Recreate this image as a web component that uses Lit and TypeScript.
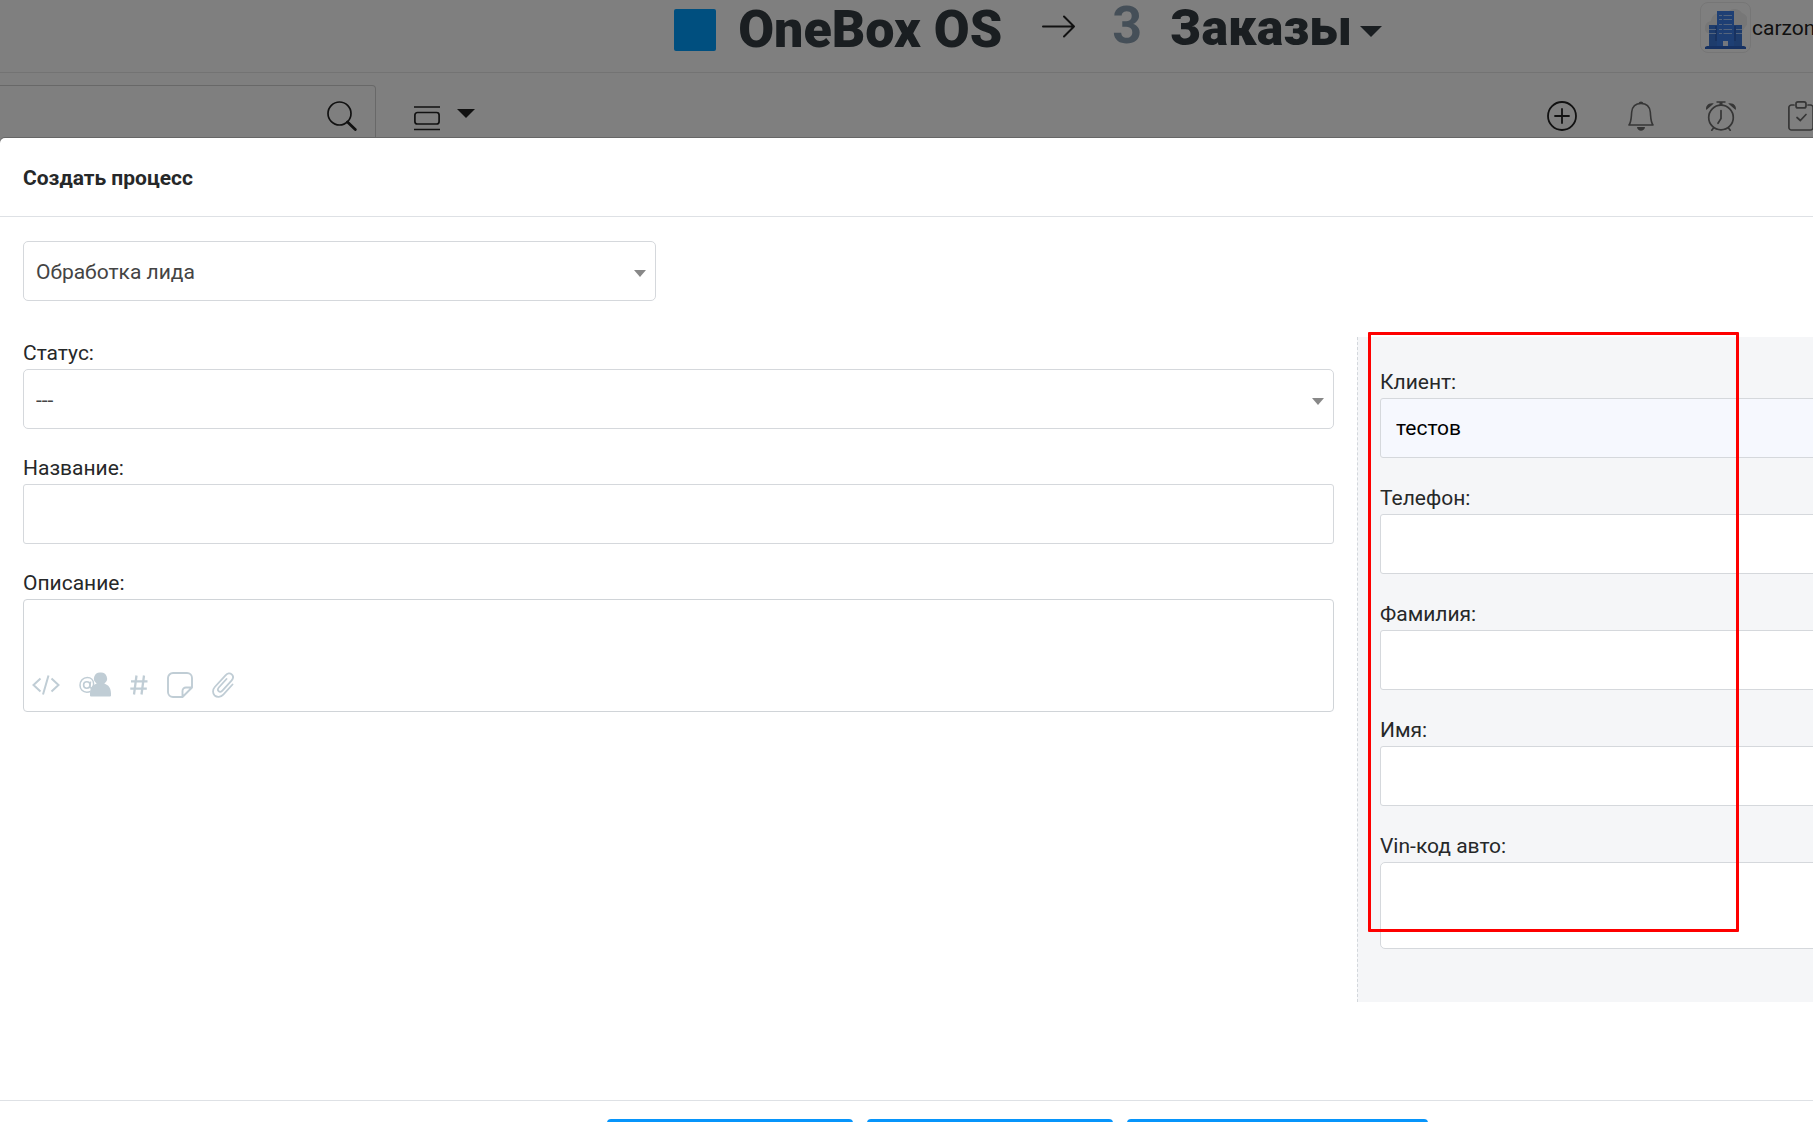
import { LitElement, html, css, svg } from "lit";
import { customElement, property } from "lit/decorators.js";

const glyphs = {
  search: {
    w: 30, h: 30,
    body: svg`<circle cx="12.5" cy="12.5" r="11.5" fill="none" stroke="currentColor" stroke-width="1.7"/>
      <path d="M20.5 21L28.3 28.5" stroke="currentColor" stroke-width="2.8" stroke-linecap="round"/>`,
  },
  view: {
    w: 26, h: 26,
    body: svg`<path d="M0.5 2H25.500M0.500 24.500H25.500" stroke="currentColor" stroke-width="1.7" stroke-linecap="round"/>
      <rect x="0.900" y="7.500" width="24.200" height="11.500" rx="2.500" fill="none" stroke="currentColor" stroke-width="1.7"/>`,
  },
  caretSmall: { w: 18, h: 9, body: svg`<path d="M0 0H18L9 9Z" fill="currentColor"/>` },
  caretLarge: { w: 22, h: 11, body: svg`<path d="M0 0H22L11 11Z" fill="currentColor"/>` },
  arrow: {
    w: 34, h: 24,
    body: svg`<path d="M1 12.500H32M22 2.500L32 12.500L22 22.500" fill="none" stroke="currentColor" stroke-width="2" stroke-linecap="round" stroke-linejoin="round"/>`,
  },
  plus: {
    w: 30, h: 30,
    body: svg`<circle cx="15" cy="15" r="14" fill="none" stroke="currentColor" stroke-width="1.8"/>
      <path d="M15 8V22M8 15H22" stroke="currentColor" stroke-width="1.8" stroke-linecap="round"/>`,
  },
  bell: {
    w: 26, h: 30,
    body: svg`<path d="M1 24H25C22.500 20.500 22.800 16 22.300 11C21.700 5.500 18 2.500 13 2.500C8 2.500 4.300 5.500 3.700 11C3.200 16 3.500 20.500 1 24Z" fill="none" stroke="currentColor" stroke-width="1.600" stroke-linejoin="round"/>
      <path d="M10.500 2.500C10.800 -0.300 15.200 -0.300 15.500 2.500ZM9 26H17C16.500 31 9.500 31 9 26Z" fill="currentColor"/>`,
  },
  alarm: {
    w: 32, h: 30,
    body: svg`<circle cx="16" cy="16.500" r="12.300" fill="none" stroke="currentColor" stroke-width="1.700"/>
      <path d="M11.500 0.300H20.500V1.800H17.500V4H14.500V1.800H11.500ZM1.300 9C0 5.500 3.500 1.200 8.800 2.500ZM30.700 9C32 5.500 28.500 1.200 23.200 2.500Z" fill="currentColor"/>
      <path d="M16 9.500V17.500L13 22.300M8.500 27L6.800 29.300M23.500 27L25.200 29.300" fill="none" stroke="currentColor" stroke-width="1.700" stroke-linecap="round"/>`,
  },
  clipboard: {
    w: 26, h: 30,
    body: svg`<path d="M6 4H3.500A2.600 2.600 0 0 0 0.900 6.600V26.400A2.600 2.600 0 0 0 3.500 29H22.500A2.600 2.600 0 0 0 25.100 26.400V6.600A2.600 2.600 0 0 0 22.500 4H20" fill="none" stroke="currentColor" stroke-width="1.700" stroke-linecap="round"/>
      <rect x="8" y="0.900" width="10" height="6" rx="2" fill="none" stroke="currentColor" stroke-width="1.700"/>
      <path d="M9 16.500L12.300 19.500L18 13.500" fill="none" stroke="currentColor" stroke-width="1.700" stroke-linecap="round"/>`,
  },
  building: {
    w: 42, h: 42,
    body: svg`<path d="M2 26A7 7 0 0 1 6 14A9 9 0 0 1 17 6H22A9 9 0 0 1 37 6A8 8 0 0 1 41 19L36 26Z" fill="#eeeeee"/>
      <rect x="4" y="18" width="33" height="22" fill="#3d78d8"/>
      <rect x="12" y="4" width="17" height="36" fill="#3d7ee8"/>
      <path d="M11 19V34M30 19V34" stroke="#2c5fb8" stroke-width="1.500"/>
      <path d="M14 8.500H17M18.500 8.500H27M14 12.500H17M18.500 12.500H27M14 17.500H17M18.500 17.500H27M4 22.500H11M14 22.500H17M18.500 22.500H27M31 22.500H37M4 26.500H11M14 26.500H17M18.500 26.500H27M31 26.500H37" stroke="#a9c8f8" stroke-width="1.200"/>
      <rect x="18" y="34" width="5" height="5" fill="#e6eefc"/>
      <path d="M0 42V40L2 39H39L41 40V42Z" fill="#2d63c4"/>`,
  },
  code: {
    w: 28, h: 22,
    body: svg`<path d="M8.500 4.500L1.500 11L8.500 17.500M19.500 4.500L26.500 11L19.500 17.500M16.500 1.500L11 20.500" fill="none" stroke="currentColor" stroke-width="2"/>`,
  },
  mention: {
    w: 32, h: 26,
    body: svg`<circle cx="7.800" cy="13" r="3.200" fill="none" stroke="currentColor" stroke-width="1.600"/>
      <path d="M11.600 9.500L10.900 14.500C10.900 17 14.500 16.500 14.600 12C14.600 8 12 5.500 8.200 5.500C4 5.500 1 9 1 13.300C1 17.500 4 20.200 7.800 20.200C9.300 20.200 10.500 19.900 11.500 19.300" fill="none" stroke="currentColor" stroke-width="1.500"/>
      <path d="M21.500 0.500A6 6 0 0 1 25.300 11.500C29.500 13 32 16 32 21.500V23.500Q32 24.500 31 24.500H12Q11 24.500 11 23.500V21.500C11 16 13.500 13 17.700 11.500A6 6 0 0 1 21.500 0.500Z" fill="currentColor"/>`,
  },
  hash: {
    w: 18, h: 20,
    body: svg`<path d="M6.500 0.500L4 19.500M14 0.500L11.500 19.500M1 6.300H17.500M0.300 13.700H16.800" stroke="currentColor" stroke-width="2.300" fill="none"/>`,
  },
  note: {
    w: 26, h: 26,
    body: svg`<path d="M15.500 25H6A5 5 0 0 1 1 20V6A5 5 0 0 1 6 1H20A5 5 0 0 1 25 6V15.500L15.500 25V19A3.500 3.500 0 0 1 19 15.500H25" fill="none" stroke="currentColor" stroke-width="1.900" stroke-linejoin="round"/>`,
  },
  clip: {
    w: 22, h: 26,
    body: svg`<path d="M20.500 12.500L11.300 22.600C8.800 25.300 5 25.600 2.700 23.500C0.400 21.300 0.500 17.600 2.800 15L13.500 3.300C15.400 1.200 18 0.800 19.700 2.400C21.400 4 21.300 6.600 19.500 8.600L10.400 18.700C9.200 20 7.600 20.200 6.600 19.200C5.600 18.200 5.700 16.800 6.800 15.500L14.500 7" fill="none" stroke="currentColor" stroke-width="1.800" stroke-linecap="round"/>`,
  },
};

type GlyphName = keyof typeof glyphs;

@customElement("ui-icon")
class UiIcon extends LitElement {
  @property() name: GlyphName = "search";

  static styles = css`
    :host { display: block; flex: none; }
    .glyph { display: block; }
  `;

  render() {
    const g = glyphs[this.name];
    return html`<svg class="glyph" width=${g.w} height=${g.h} viewBox="0 0 ${g.w} ${g.h}" aria-hidden="true">${g.body}</svg>`;
  }
}

interface Field {
  id: string;
  label: string;
  value?: string;
  multiline?: boolean;
}

const clientFields: Field[] = [
  { id: "client", label: "Клиент:", value: "тестов" },
  { id: "phone", label: "Телефон:" },
  { id: "surname", label: "Фамилия:" },
  { id: "name", label: "Имя:" },
  { id: "vin", label: "Vin-код авто:", multiline: true },
];

const shortcuts: { icon: GlyphName; label: string; strong?: boolean }[] = [
  { icon: "plus", label: "Добавить", strong: true },
  { icon: "bell", label: "Уведомления" },
  { icon: "alarm", label: "Напоминания" },
  { icon: "clipboard", label: "Задачи" },
];

const editorTools: { icon: GlyphName; label: string }[] = [
  { icon: "code", label: "Код" },
  { icon: "mention", label: "Упомянуть" },
  { icon: "hash", label: "Тег" },
  { icon: "note", label: "Заметка" },
  { icon: "clip", label: "Прикрепить файл" },
];

@customElement("app-root")
class AppRoot extends LitElement {
  static styles = css`
    :host {
      display: block;
      position: relative;
      height: 100vh;
      overflow: hidden;
      background: #fff;
      color: #262829;
      font: 21px/32px Roboto, "Noto Sans", sans-serif;
    }
    * { box-sizing: border-box; }
    button { border: 0; padding: 0; background: none; color: inherit; font: inherit; }
    a { color: inherit; text-decoration: none; }

    .backdrop { position: relative; overflow: hidden; }
    .backdrop::after {
      content: "";
      position: absolute;
      inset: 0;
      background: rgba(0, 0, 0, 0.5);
      pointer-events: none;
    }
    .topbar {
      display: flex;
      height: 73px;
      border-bottom: 1px solid #e6e6e6;
    }
    .crumbs {
      flex: 1;
      display: flex;
      justify-content: center;
      align-items: flex-start;
      padding-left: 356px;
      font: 900 52px/60px Roboto, sans-serif;
      color: #353d42;
      white-space: nowrap;
    }
    .brand { display: flex; align-items: flex-start; gap: 22px; }
    .brand-mark { width: 42px; height: 42px; margin-top: 9px; border-radius: 2px; background: #009eff; }
    .crumb-arrow { margin: 14px 36px 0 40px; color: #222; }
    .count { margin-right: 28px; font-weight: 700; line-height: 52px; color: #8b9fb0; }
    .section { display: flex; align-items: flex-start; gap: 8px; font-size: 50px; line-height: 56px; }
    .section-caret { margin-top: 26px; }
    .account { display: flex; width: 113px; gap: 1px; color: #222; overflow: hidden; line-height: 56px; }
    .avatar {
      flex: none;
      width: 51px;
      height: 51px;
      margin-top: 2px;
      padding: 4px;
      border: 1px solid #ececec;
      border-radius: 8px;
    }

    .toolbar { display: flex; align-items: flex-start; height: 65px; color: #222; }
    .search {
      display: flex;
      width: 376px;
      height: 60px;
      margin-top: 12px;
      padding: 15px 18px 0 0;
      border: 1px solid #d0d0d0;
      border-left: 0;
      border-radius: 0 4px 4px 0;
      align-items: flex-start;
    }
    .search-input { flex: 1; min-width: 0; border: 0; outline: 0; background: none; font: inherit; }
    .view-toggle { display: flex; gap: 17px; margin: 32px auto 0 38px; }
    .view-caret { margin-top: 4px; }
    .shortcuts { display: flex; gap: 51px; margin: 28px -1px 0 0; color: #6c6c6c; }
    .shortcut.strong { color: #222; }

    .modal {
      position: relative;
      background: #fff;
      border-radius: 5px 0 0 0;
      box-shadow: 0 -1px 0 #666;
    }
    .corners { background: #808080; }
    .modal-head { padding: 24px 23px 22px; border-bottom: 1px solid #dee1e5; }
    .title { margin: 0; font: 700 21px/32px Roboto, sans-serif; }
    .modal-body { padding: 24px 0 98px 23px; }
    .columns {
      display: grid;
      grid-template-columns: minmax(0, 1fr) 456px;
      margin-top: 36px;
    }
    .main-fields { display: flex; flex-direction: column; gap: 23px; padding-right: 23px; }
    .side-fields {
      display: flex;
      flex-direction: column;
      gap: 24px;
      padding: 29px 0 53px 22px;
      border-left: 1px dashed #d3d7dc;
      background: #f5f6f8;
      overflow: hidden;
    }
    .side-fields .field { margin-right: -20px; }
    .field { display: flex; flex-direction: column; }
    .control {
      width: 100%;
      height: 60px;
      padding: 0 15px;
      border: 1px solid #d5d8dc;
      border-radius: 3px;
      background: #fff;
      color: #000;
      font: inherit;
      outline: 0;
    }
    .control.filled { background: #f6f8fe; }
    textarea.control { display: block; height: 87px; border-radius: 5px; padding: 12px 15px; resize: none; }
    .select-wrap { display: grid; align-items: center; }
    .select-wrap.process { max-width: 633px; }
    .select-wrap > * { grid-area: 1 / 1; }
    select.control { appearance: none; padding: 2px 40px 0 12px; border-radius: 5px; color: #444; }
    .select-caret {
      justify-self: end;
      margin: 4px 10px 0 0;
      border: 6px solid transparent;
      border-top: 7px solid #888;
      border-bottom: 0;
      pointer-events: none;
    }
    .editor { border: 1px solid #d0d4d8; border-radius: 4px; }
    .editor-text {
      display: block;
      width: 100%;
      height: 68px;
      padding: 12px 15px;
      border: 0;
      outline: 0;
      background: none;
      font: inherit;
      resize: none;
    }
    .editor-tools { display: flex; align-items: center; height: 43px; gap: 19px; padding: 0 8px 10px; color: #c0cdd5; }

    .modal-foot {
      display: flex;
      justify-content: center;
      gap: 14px;
      padding: 18px 0 18px 222px;
      border-top: 1px solid #dee1e5;
    }
    .action { width: 246px; height: 60px; border-radius: 4px; background: #0795fb; }
    .action.wide { width: 301px; }

    .side { position: relative; display: grid; }
    .highlight {
      position: absolute;
      left: 11px;
      top: -5px;
      width: 371px;
      height: 600px;
      border: 3px solid #fe0000;
      border-radius: 1px;
      pointer-events: none;
    }
  `;

  private renderField(f: Field) {
    return html`<div class="field">
      <label for=${f.id}>${f.label}</label>
      ${f.multiline
        ? html`<textarea class="control" id=${f.id}></textarea>`
        : html`<input class="control ${f.value ? "filled" : ""}" id=${f.id} type="text" .value=${f.value ?? ""} />`}
    </div>`;
  }

  render() {
    return html`
      <div class="backdrop">
        <header class="topbar">
          <nav class="crumbs">
            <a class="brand" href="#"><span class="brand-mark"></span>OneBox OS</a>
            <ui-icon class="crumb-arrow" name="arrow"></ui-icon>
            <span class="count">3</span>
            <a class="section" href="#">Заказы<ui-icon class="section-caret" name="caretLarge"></ui-icon></a>
          </nav>
          <a class="account" href="#"><span class="avatar"><ui-icon name="building"></ui-icon></span>carzon</a>
        </header>
        <div class="toolbar">
          <div class="search">
            <input class="search-input" type="search" aria-label="Поиск" />
            <button aria-label="Найти"><ui-icon name="search"></ui-icon></button>
          </div>
          <button class="view-toggle" aria-label="Вид">
            <ui-icon name="view"></ui-icon><ui-icon class="view-caret" name="caretSmall"></ui-icon>
          </button>
          <div class="shortcuts">
            ${shortcuts.map(
              (s) => html`<button class="shortcut ${s.strong ? "strong" : ""}" aria-label=${s.label}><ui-icon name=${s.icon}></ui-icon></button>`
            )}
          </div>
        </div>
      </div>
      <div class="corners">
        <section class="modal" role="dialog" aria-labelledby="title">
          <header class="modal-head"><h1 class="title" id="title">Создать процесс</h1></header>
          <div class="modal-body">
            <div class="select-wrap process">
              <select class="control" aria-label="Процесс"><option>Обработка лида</option></select>
              <span class="select-caret"></span>
            </div>
            <div class="columns">
              <div class="main-fields">
                <div class="field">
                  <label for="status">Статус:</label>
                  <div class="select-wrap">
                    <select class="control" id="status"><option>---</option></select>
                    <span class="select-caret"></span>
                  </div>
                </div>
                ${this.renderField({ id: "heading", label: "Название:" })}
                <div class="field">
                  <label for="description">Описание:</label>
                  <div class="editor">
                    <textarea class="editor-text" id="description"></textarea>
                    <div class="editor-tools">
                      ${editorTools.map((t) => html`<button aria-label=${t.label}><ui-icon name=${t.icon}></ui-icon></button>`)}
                    </div>
                  </div>
                </div>
              </div>
              <div class="side">
                <div class="side-fields">${clientFields.map((f) => this.renderField(f))}</div>
                <div class="highlight"></div>
              </div>
            </div>
          </div>
          <footer class="modal-foot">
            <button class="action" aria-label="Создать"></button>
            <button class="action" aria-label="Создать и открыть"></button>
            <button class="action wide" aria-label="Создать и добавить ещё"></button>
          </footer>
        </section>
      </div>
    `;
  }
}
